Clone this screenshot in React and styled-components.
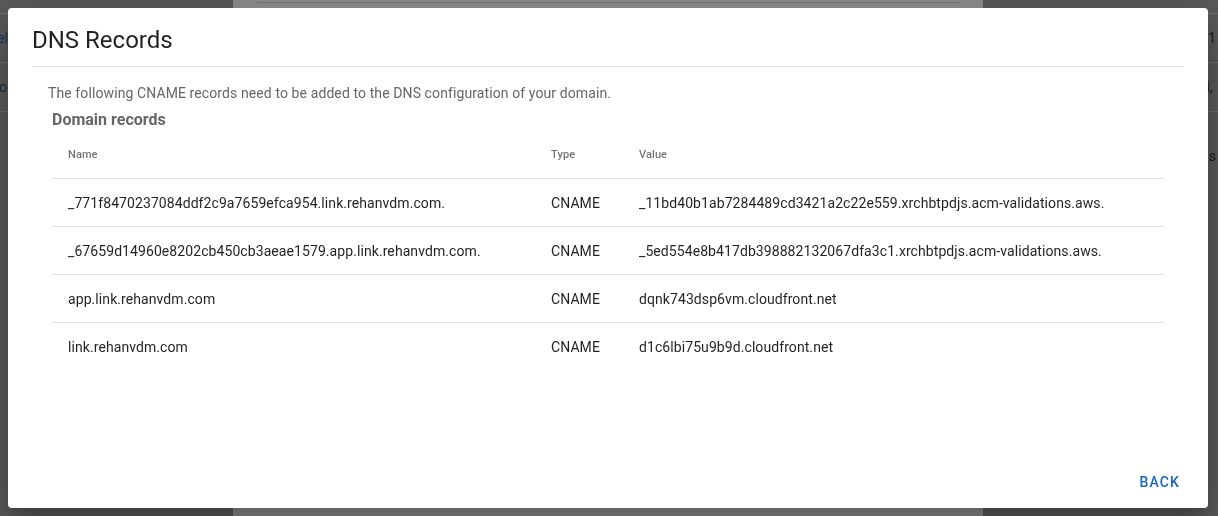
import React from "react";
import styled, { createGlobalStyle } from "styled-components";

const GlobalStyle = createGlobalStyle`
  html, body {
    margin: 0;
    padding: 0;
    overflow: hidden;
    background: #a2a2a2;
    font-family: Roboto, "Noto Sans", Arial, sans-serif;
  }
  * { box-sizing: border-box; }
`;

/* ---------- background page (under the modal) ---------- */

const Page = styled.div`
  width: 100vw;
  height: 100vh;
  display: grid;
  grid-template-columns: 233px 750px 1fr;
  background: #a2a2a2;
`;

const SideColumn = styled.div`
  display: flex;
  flex-direction: column;
  padding-top: 13px;
  overflow: hidden;
`;

const SideRow = styled.div`
  display: flex;
  align-items: center;
  justify-content: ${(p) => (p.$right ? "flex-end" : "flex-start")};
  height: ${(p) => p.$h || 49}px;
  border-top: 1px solid #c4c4c4;
  padding: ${(p) => (p.$right ? "0 2px 0 0" : "0")};
  font-size: 14px;
  white-space: nowrap;
  color: ${(p) => p.$color || "#2b2b2b"};
  text-indent: ${(p) => p.$indent || 0}px;
`;

const Dot = styled.span`
  display: inline-block;
  width: 5px;
  height: 5px;
  border-radius: 50%;
  background: #2f7fd0;
  margin-right: 3px;
`;

const Orange = styled.span`
  color: #e0902a;
`;

const CenterPanel = styled.div`
  background: #ffffff;
  padding: 2px 23px 0 24px;
`;

const PanelLine = styled.div`
  height: 1px;
  background: #d4d4d4;
`;

/* ---------- modal ---------- */

const Backdrop = styled.div`
  position: fixed;
  inset: 0;
  background: rgba(0, 0, 0, 0.45);
`;

const Dialog = styled.div`
  position: fixed;
  top: 8px;
  left: 8px;
  width: 1200px;
  height: 500px;
  background: #ffffff;
  border-radius: 4px;
  box-shadow: 0px 11px 15px -7px rgba(0, 0, 0, 0.2),
    0px 24px 38px 3px rgba(0, 0, 0, 0.14), 0px 9px 46px 8px rgba(0, 0, 0, 0.12);
  display: flex;
  flex-direction: column;
  font-family: Roboto, "Noto Sans", Arial, sans-serif;
`;

const Title = styled.h2`
  margin: 0;
  padding: 16px 24px 10px;
  font-size: 24px;
  line-height: 32px;
  font-weight: 400;
  color: rgba(0, 0, 0, 0.87);
`;

const Divider = styled.hr`
  margin: 0 24px;
  border: none;
  height: 1px;
  background: #e0e0e0;
`;

const Content = styled.div`
  flex: 1;
  padding: 16px 44px 0 40px;
`;

const Description = styled.p`
  margin: 0;
  font-size: 14px;
  line-height: 20px;
  letter-spacing: 0.1px;
  color: #666666;
`;

const Section = styled.section`
  padding-left: 4px;
`;

const SectionHeading = styled.h3`
  margin: 7px 0 1px;
  font-size: 16px;
  line-height: 20px;
  font-weight: 700;
  color: #666666;
`;

const Table = styled.div`
  display: flex;
  flex-direction: column;
`;

const Row = styled.div`
  display: grid;
  grid-template-columns: 483px 88px 1fr;
  align-items: center;
  height: 48px;
  border-bottom: 1px solid #e0e0e0;
  &:last-child {
    border-bottom: none;
  }
`;

const Cell = styled.div`
  padding: 0 16px;
  white-space: nowrap;
  font-size: ${(p) => (p.$head ? "11px" : "14px")};
  font-weight: ${(p) => (p.$head ? 500 : 400)};
  letter-spacing: ${(p) => (p.$head ? "0.1px" : "0.08px")};
  color: ${(p) => (p.$head ? "rgba(0, 0, 0, 0.56)" : "rgba(0, 0, 0, 0.87)")};
  line-height: 20px;
`;

const Actions = styled.div`
  display: flex;
  justify-content: flex-end;
  padding: 8px 20px 8px;
`;

const TextButton = styled.button`
  height: 36px;
  min-width: 64px;
  padding: 0 8px;
  border: none;
  background: none;
  border-radius: 4px;
  font-family: inherit;
  font-size: 14px;
  font-weight: 500;
  letter-spacing: 0.08em;
  text-transform: uppercase;
  color: #1565c0;
  cursor: pointer;
  text-align: right;
`;

const records = [
  {
    name: "_771f8470237084ddf2c9a7659efca954.link.rehanvdm.com.",
    type: "CNAME",
    value: "_11bd40b1ab7284489cd3421a2c22e559.xrchbtpdjs.acm-validations.aws.",
  },
  {
    name: "_67659d14960e8202cb450cb3aeae1579.app.link.rehanvdm.com.",
    type: "CNAME",
    value: "_5ed554e8b417db398882132067dfa3c1.xrchbtpdjs.acm-validations.aws.",
  },
  {
    name: "app.link.rehanvdm.com",
    type: "CNAME",
    value: "dqnk743dsp6vm.cloudfront.net",
  },
  {
    name: "link.rehanvdm.com",
    type: "CNAME",
    value: "d1c6lbi75u9b9d.cloudfront.net",
  },
];

export default function App() {
  return (
    <>
      <GlobalStyle />
      <Page>
        <SideColumn>
          <SideRow $color="#1f5fae" $indent={-3}>el</SideRow>
          <SideRow $color="#1f4f8e" $indent={-1}>o.</SideRow>
          <SideRow />
        </SideColumn>
        <CenterPanel>
          <PanelLine />
        </CenterPanel>
        <SideColumn>
          <SideRow $right>11</SideRow>
          <SideRow $right>
            d, <Orange>&nbsp;</Orange>
          </SideRow>
          <SideRow $right $h={88}>
            <Dot />s
          </SideRow>
        </SideColumn>
      </Page>
      <Backdrop />
      <Dialog role="dialog" aria-labelledby="dns-title">
        <Title id="dns-title">DNS Records</Title>
        <Divider />
        <Content>
          <Description>
            The following CNAME records need to be added to the DNS configuration of your domain.
          </Description>
          <Section>
            <SectionHeading>Domain records</SectionHeading>
            <Table>
              <Row>
                <Cell $head>Name</Cell>
                <Cell $head>Type</Cell>
                <Cell $head>Value</Cell>
              </Row>
              {records.map((r) => (
                <Row key={r.name}>
                  <Cell>{r.name}</Cell>
                  <Cell>{r.type}</Cell>
                  <Cell>{r.value}</Cell>
                </Row>
              ))}
            </Table>
          </Section>
        </Content>
        <Actions>
          <TextButton>Back</TextButton>
        </Actions>
      </Dialog>
    </>
  );
}
